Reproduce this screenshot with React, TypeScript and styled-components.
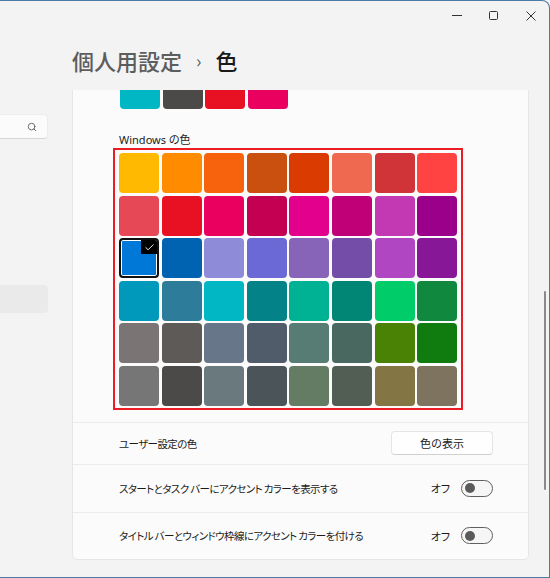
import React from 'react';
import styled, { createGlobalStyle } from 'styled-components';
import { Check, Search } from 'lucide-react';

const GlobalStyle = createGlobalStyle`
  html, body {
    margin: 0;
    padding: 0;
    width: 550px;
    height: 578px;
    overflow: hidden;
    background: #f3f3f3;
  }
  * {
    box-sizing: border-box;
  }
`;

const recentColors = ['#00b7c3', '#4c4a48', '#e81123', '#ea005e'];

const windowsColors = [
  '#ffb900', '#ff8c00', '#f7630c', '#ca5010', '#da3b01', '#ef6950', '#d13438', '#ff4343',
  '#e74856', '#e81123', '#ea005e', '#c30052', '#e3008c', '#bf0077', '#c239b3', '#9a0089',
  '#0078d7', '#0063b1', '#8e8cd8', '#6b69d6', '#8764b8', '#744da9', '#b146c2', '#881798',
  '#0099bc', '#2d7d9a', '#00b7c3', '#038387', '#00b294', '#018574', '#00cc6a', '#10893e',
  '#7a7574', '#5d5a58', '#68768a', '#515c6b', '#567c73', '#486860', '#498205', '#107c10',
  '#767676', '#4c4a48', '#69797e', '#4a5459', '#647c64', '#525e54', '#847545', '#7e735f',
];

const SELECTED = 16;

const App = () => {
  return (
    <>
      <GlobalStyle />
      <Window>
        <TitleBar>
          <CaptionButton aria-label="minimize">
            <MinimizeGlyph />
          </CaptionButton>
          <CaptionButton aria-label="maximize">
            <MaximizeGlyph />
          </CaptionButton>
          <CaptionButton aria-label="close">
            <svg width="10" height="10" viewBox="0 0 10 10">
              <path d="M0.5 0.5 L9.5 9.5 M9.5 0.5 L0.5 9.5" stroke="#333" strokeWidth="1" fill="none" />
            </svg>
          </CaptionButton>
        </TitleBar>
        <Body>
          <Sidebar>
            <SearchBox>
              <Search size={10} strokeWidth={2} color="#555" />
            </SearchBox>
            <NavItem />
          </Sidebar>
          <Main>
            <Header>
              <Crumb>個人用設定</Crumb>
              <Chevron>›</Chevron>
              <CurrentCrumb>色</CurrentCrumb>
            </Header>
            <Viewport>
              <ScrollContent>
                <Card>
                  <PaletteSection>
                    <SwatchRow>
                      {recentColors.map((c) => (
                        <Swatch key={c} $color={c} />
                      ))}
                    </SwatchRow>
                    <SectionLabel>Windows の色</SectionLabel>
                    <Highlight>
                      <SwatchGrid>
                        {windowsColors.map((c, i) => (
                          <Swatch key={i} $color={c} $selected={i === SELECTED}>
                            {i === SELECTED && (
                              <CheckBadge>
                                <Check size={11} strokeWidth={2} color="#fff" />
                              </CheckBadge>
                            )}
                          </Swatch>
                        ))}
                      </SwatchGrid>
                    </Highlight>
                  </PaletteSection>
                  <SettingRow $height={41}>
                    <RowLabel>ユーザー設定の色</RowLabel>
                    <ActionButton>色の表示</ActionButton>
                  </SettingRow>
                  <SettingRow $height={48}>
                    <RowLabel>スタートとタスク バーにアクセント カラーを表示する</RowLabel>
                    <ToggleWrap>
                      <ToggleText>オフ</ToggleText>
                      <Toggle>
                        <Knob />
                      </Toggle>
                    </ToggleWrap>
                  </SettingRow>
                  <SettingRow $height={47}>
                    <RowLabel>タイトル バーとウィンドウ枠線にアクセント カラーを付ける</RowLabel>
                    <ToggleWrap>
                      <ToggleText>オフ</ToggleText>
                      <Toggle>
                        <Knob />
                      </Toggle>
                    </ToggleWrap>
                  </SettingRow>
                </Card>
              </ScrollContent>
              <ScrollThumb />
            </Viewport>
          </Main>
        </Body>
      </Window>
    </>
  );
};

export default App;

const Window = styled.div`
  width: 550px;
  height: 578px;
  background: #f3f3f3;
  border-top: 1px solid #4b7aa3;
  border-right: 1px solid #4b7aa3;
  border-bottom: 1px solid #4b7aa3;
  border-top-right-radius: 8px;
  display: flex;
  flex-direction: column;
  overflow: hidden;
  font-family: "Noto Sans", "Noto Sans CJK JP", sans-serif;
  color: #1b1b1b;
`;

const TitleBar = styled.div`
  height: 29px;
  flex-shrink: 0;
  display: flex;
  justify-content: flex-end;
  align-items: center;
`;

const CaptionButton = styled.div`
  width: 37px;
  height: 29px;
  display: flex;
  align-items: center;
  justify-content: center;
`;

const MinimizeGlyph = styled.div`
  width: 10px;
  height: 1px;
  background: #333;
`;

const MaximizeGlyph = styled.div`
  width: 9px;
  height: 9px;
  border: 1px solid #333;
  border-radius: 1.5px;
`;

const Body = styled.div`
  flex: 1;
  display: flex;
  min-height: 0;
`;

const Sidebar = styled.div`
  width: 72px;
  flex-shrink: 0;
  display: flex;
  flex-direction: column;
  padding-top: 84px;
`;

const SearchBox = styled.div`
  width: 48px;
  height: 25px;
  background: #fbfbfb;
  border: 1px solid #ececec;
  border-left: none;
  border-bottom: 1px solid #d6d6d6;
  border-radius: 0 4px 4px 0;
  display: flex;
  align-items: center;
  justify-content: flex-end;
  padding-right: 10px;
`;

const NavItem = styled.div`
  width: 48px;
  height: 28px;
  margin-top: 146px;
  background: #eaeaea;
  border-radius: 0 4px 4px 0;
`;

const Main = styled.div`
  flex: 1;
  display: flex;
  flex-direction: column;
  padding-right: 20px;
  position: relative;
  min-width: 0;
`;

const Header = styled.div`
  height: 60px;
  flex-shrink: 0;
  display: flex;
  align-items: center;
  gap: 10px;
  font-size: 22px;
  font-weight: 500;
  font-family: "Noto Sans CJK JP", sans-serif;
  padding-bottom: 1px;
`;

const Crumb = styled.span`
  color: #5d5d5d;
`;

const Chevron = styled.span`
  color: #5d5d5d;
  font-size: 18px;
  font-weight: 400;
  margin: 0 4px;
`;

const CurrentCrumb = styled.span`
  color: #1a1a1a;
`;

const Viewport = styled.div`
  flex: 1;
  overflow: hidden;
  min-height: 0;
`;

const ScrollContent = styled.div`
  margin-top: -31px;
`;

const Card = styled.div`
  width: 457px;
  background: #fbfbfb;
  border: 1px solid #e6e6e6;
  border-radius: 5px;
`;

const PaletteSection = styled.div`
  padding: 9px 0 12px 46px;
  border-bottom: 1px solid #ebebeb;
`;

const SwatchRow = styled.div`
  display: flex;
  gap: 2.5px;
  padding-left: 1px;
`;

const SectionLabel = styled.div`
  margin-top: 24px;
  height: 15px;
  line-height: 14px;
  font-size: 11px;
  color: #1b1b1b;
  font-feature-settings: "palt";
`;

const Highlight = styled.div`
  width: 350px;
  margin-left: -6px;
  border: 2px solid #ec1c24;
  padding: 3px 4px 2px 4px;
`;

const SwatchGrid = styled.div`
  display: grid;
  grid-template-columns: repeat(8, 40px);
  grid-auto-rows: 40px;
  gap: 2.6px;
`;

const Swatch = styled.div<{ $color: string; $selected?: boolean }>`
  width: 40px;
  height: 40px;
  border-radius: 4px;
  background: ${(p) => p.$color};
  position: relative;
  overflow: hidden;
  ${(p) => (p.$selected ? 'border: 2px solid #111; box-shadow: inset 0 0 0 1px #fff;' : '')}
`;

const CheckBadge = styled.div`
  position: absolute;
  top: 0;
  right: 0;
  width: 16px;
  height: 14px;
  background: #000;
  display: flex;
  align-items: center;
  justify-content: center;
`;

const SettingRow = styled.div<{ $height: number }>`
  height: ${(p) => p.$height}px;
  display: flex;
  align-items: center;
  justify-content: space-between;
  padding: 0 35px 0 46px;
  & + & {
    border-top: 1px solid #ebebeb;
  }
`;

const RowLabel = styled.div`
  font-size: 10.5px;
  letter-spacing: -0.6px;
  color: #1b1b1b;
  font-family: "Noto Sans CJK JP", sans-serif;
  font-feature-settings: "palt";
`;

const ActionButton = styled.div`
  width: 102px;
  height: 24px;
  background: #fefefe;
  border: 1px solid #e5e5e5;
  border-bottom-color: #d0d0d0;
  border-radius: 4px;
  display: flex;
  align-items: center;
  justify-content: center;
  font-size: 11px;
  font-family: "Noto Sans CJK JP", sans-serif;
  color: #1b1b1b;
`;

const ToggleWrap = styled.div`
  display: flex;
  align-items: center;
  gap: 11px;
`;

const ToggleText = styled.span`
  font-size: 11px;
  font-family: "Noto Sans CJK JP", sans-serif;
  font-feature-settings: "palt";
`;

const Toggle = styled.div`
  width: 32px;
  height: 17px;
  border: 1px solid #5f5f5f;
  border-radius: 9px;
  background: #f6f6f6;
  display: flex;
  align-items: center;
  padding-left: 3px;
`;

const Knob = styled.div`
  width: 10px;
  height: 10px;
  border-radius: 50%;
  background: #5a5a5a;
`;

const ScrollThumb = styled.div`
  position: absolute;
  right: 3px;
  top: 261px;
  width: 2px;
  height: 199px;
  border-radius: 1px;
  background: #8a8a8a;
`;
